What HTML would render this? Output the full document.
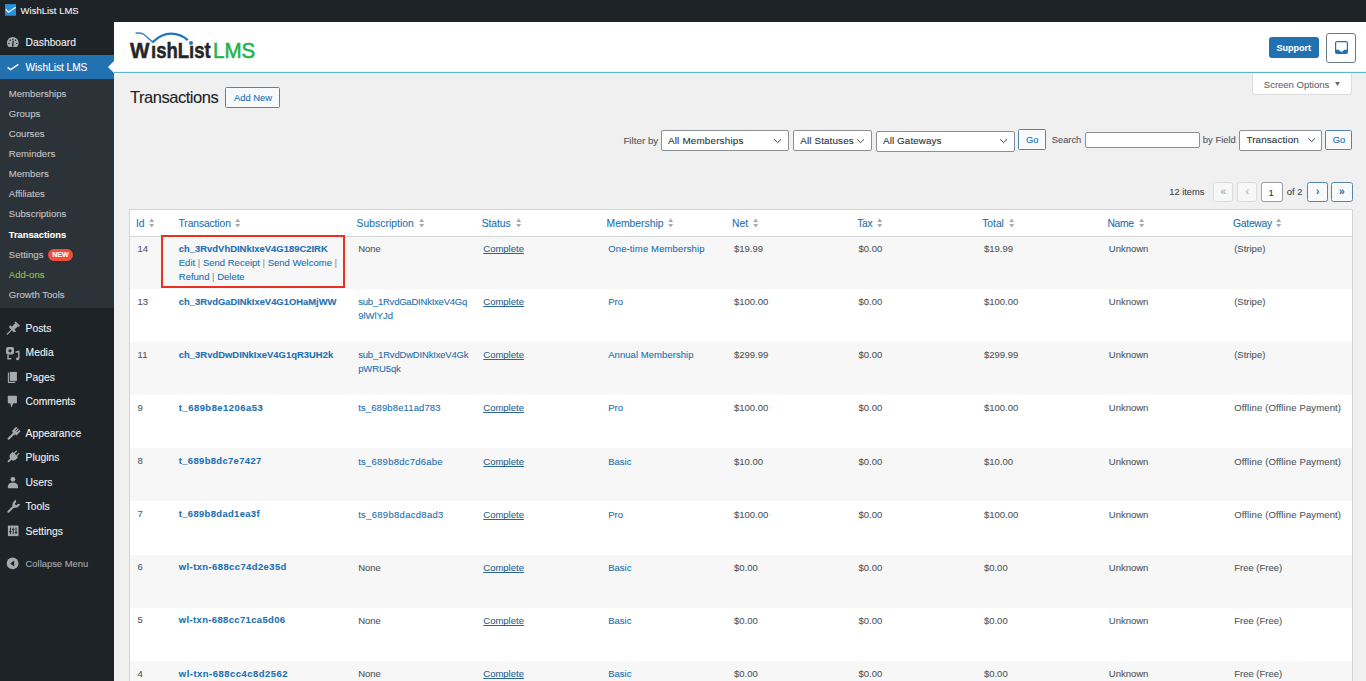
<!DOCTYPE html><html><head><meta charset="utf-8"><title>Transactions</title><style>
*{box-sizing:border-box;margin:0;padding:0}
html,body{width:1366px;height:681px;overflow:hidden;background:#f0f0f1;font-family:"Liberation Sans",sans-serif;color:#3c434a;-webkit-text-stroke-width:0.1px}
div,span,a{position:absolute;white-space:nowrap}
.t{line-height:1}
#adminbar{left:0;top:0;width:1366px;height:22px;background:#1d2327}
#side{left:0;top:22px;width:114px;height:659px;background:#1d2327}
#sub{left:0;top:79.2px;width:114px;height:228.6px;background:#2c3338}
#hl{left:0;top:54.6px;width:114px;height:24.6px;background:#2271b1}
.mi{left:25.6px;color:#f0f0f1;font-size:10.3px;line-height:12px}
.si{left:8.8px;color:#c3c4c7;font-size:9.6px;line-height:12px}
.ico{left:6px;width:14px;height:14px}
#header{left:114px;top:22px;width:1252px;height:50px;background:#fff}
#hline{left:114px;top:72px;width:1252px;height:1.2px;background:#5bb7c9}
#hhalo{left:114px;top:71px;width:1252px;height:1px;background:#e4f9fc}
.btn{border:1px solid #5486a8;border-radius:1.5px;color:#2271b1;background:#f8f9fa;font-size:9.4px;text-align:center}
.sel{border:1px solid #8c8f94;border-radius:2px;background:#fff;color:#2c3338;font-size:10.25px}
.sel span{left:6px}
.sel svg{position:absolute;top:50%;margin-top:-4px}
.lbl{font-size:9.8px;color:#50575e}
.pbtn{border:1px solid #dcdcde;border-radius:2.5px;background:#f6f7f7;color:#a7aaad;font-size:10px;text-align:center}
.pbtn.on{border-color:#5486a8;color:#2271b1;background:#f8f9fa;font-weight:bold}
#table{left:129.4px;top:209.3px;width:1223.8px;height:480px;border:1px solid #d4d5d7;background:#fff;overflow:hidden}
.th{color:#2271b1;font-size:10.3px;line-height:12px}
.th svg{position:absolute;top:1px}
.row{left:0;width:1222px;height:53.15px}
.row.alt{background:#f7f7f7}
.c{font-size:9.5px;line-height:13.9px;color:#50575e}
.lnk{color:#2271b1}
.b{font-weight:bold}
.u{text-decoration:underline;text-decoration-skip-ink:none;color:#2b6590}
</style></head><body>
<div id="adminbar">
<svg style="position:absolute;left:4.7px;top:4.1px" width="11.7" height="11.8" viewBox="0 0 12 12"><rect width="12" height="12" fill="#2a8fd8"/><path d="M0.8 5.3 L3.5 8.4 L11 3.2" stroke="#f4f6f8" stroke-width="1.3" fill="none" stroke-linejoin="round"/></svg>
<span class="t" style="left:20.6px;top:6.4px;font-size:9.5px;color:#f0f0f1">WishList LMS</span>
</div>
<div id="side"></div><div id="sub"></div><div id="hl"></div>
<svg style="position:absolute;left:108px;top:61px" width="6" height="12" viewBox="0 0 6 12"><path d="M6 0 L0 6 L6 12Z" fill="#fff"/></svg>
<span class="mi t" style="top:36.55px;font-size:10.3px;color:#f0f0f1;left:25.6px">Dashboard</span>
<span class="mi t" style="top:61.95px;font-size:10.1px;color:#fff;left:25.6px">WishList LMS</span>
<span class="si t" style="top:87.70px;color:#c3c4c7;">Memberships</span>
<span class="si t" style="top:108.10px;color:#c3c4c7;">Groups</span>
<span class="si t" style="top:128.10px;color:#c3c4c7;">Courses</span>
<span class="si t" style="top:148.10px;color:#c3c4c7;">Reminders</span>
<span class="si t" style="top:168.10px;color:#c3c4c7;">Members</span>
<span class="si t" style="top:188.10px;color:#c3c4c7;">Affiliates</span>
<span class="si t" style="top:208.30px;color:#c3c4c7;">Subscriptions</span>
<span class="si t" style="top:228.50px;color:#fff;font-weight:bold;font-size:9.3px;">Transactions</span>
<span class="si t" style="top:248.90px;color:#c3c4c7;">Settings</span>
<span class="si t" style="top:269.00px;color:#8bc34a;">Add-ons</span>
<span class="si t" style="top:288.70px;color:#c3c4c7;">Growth Tools</span>
<span style="left:47.9px;top:248.8px;width:25.2px;height:12px;border-radius:6.5px;background:#ee4e3a;color:#fff;font-size:7px;font-weight:bold;text-align:center;line-height:12px">NEW</span>
<svg style="position:absolute;left:0;top:0" width="114" height="681" viewBox="0 0 114 681">
<g fill="#a7aaad">
<path d="M8.6 47.1 A5.9 5.9 0 1 1 17 47.1 Z"/>
<path d="M12.8 46.2 L13.1 41.2" stroke="#1d2327" stroke-width="1.3" stroke-linecap="round"/>
<circle cx="10.2" cy="40.3" r="0.75" fill="#1d2327"/><circle cx="15.5" cy="40.3" r="0.75" fill="#1d2327"/><circle cx="8.9" cy="43.4" r="0.7" fill="#1d2327"/><circle cx="16.8" cy="43.4" r="0.7" fill="#1d2327"/><circle cx="12.9" cy="39.4" r="0.7" fill="#1d2327"/>
</g>
<path d="M7.6 67.3 L10.6 69.6 L18.4 64.4" stroke="#f0f0f1" stroke-width="1.7" fill="none" stroke-linejoin="round"/>
<g fill="#a7aaad" transform="translate(12.2 329.2) rotate(45) scale(1.05)">
<rect x="-2.9" y="-7.6" width="5.8" height="1.8" rx="0.4"/><rect x="-1.9" y="-6" width="3.8" height="5" /><path d="M-4.3 -1.2 H4.3 L3.2 1 H-3.2 Z"/><rect x="-0.55" y="0.8" width="1.1" height="6.3"/>
</g>
<g fill="#a7aaad">
<path d="M6 349 Q6 347 8 347 H12.2 Q14 347 14 349 V352.5 Q14 354.5 12 354.5 H8 Q6 354.5 6 352.5 Z"/>
<circle cx="10" cy="350.8" r="1.6" fill="#1d2327"/>
<path d="M8 354.5 V358.8 H11.2" stroke="#a7aaad" stroke-width="1.4" fill="none"/>
<path d="M15.6 352.2 L18.8 351.4 V358.6" stroke="#a7aaad" stroke-width="1.4" fill="none"/>
<ellipse cx="17.6" cy="358.8" rx="1.7" ry="1.4"/>
</g>
<g fill="#a7aaad">
<path d="M8.4 372.6 V382.4 H15.3" stroke="#a7aaad" stroke-width="1.1" fill="none"/>
<rect x="9.8" y="371.9" width="7.1" height="9"/>
</g>
<g fill="#a7aaad">
<rect x="7.8" y="395.7" width="9.1" height="7.6" rx="0.5"/>
<path d="M10.2 403 L11.3 407.4 L13.6 403 Z"/>
</g>
<g fill="#a7aaad" transform="translate(13.2 434.2) rotate(45)">
<path d="M-3.2 -7.2 H3.2 V-1.4 H-3.2 Z"/><rect x="-1.6" y="-1.6" width="3.2" height="1.8"/><rect x="-1.05" y="0" width="2.1" height="7.4" rx="0.8"/>
<rect x="-1.4" y="-7.2" width="0.7" height="3.2" fill="#1d2327"/><rect x="0.7" y="-7.2" width="0.7" height="3.2" fill="#1d2327"/>
</g>
<g fill="#a7aaad" transform="translate(13.3 456.6) rotate(45)">
<rect x="-2.3" y="-6.6" width="1.2" height="4"/><rect x="1.1" y="-6.6" width="1.2" height="4"/>
<path d="M-3.8 -3 H3.8 V0.2 Q3.8 3 0.9 3.4 V7.5 H-0.9 V3.4 Q-3.8 3 -3.8 0.2 Z"/>
</g>
<g fill="#a7aaad">
<circle cx="12.9" cy="479.3" r="2.4"/>
<path d="M7.9 488.2 V486.2 Q8.4 482.6 12.9 482.6 Q17.4 482.6 18 486.2 V488.2 Z"/>
</g>
<g fill="#a7aaad" transform="translate(12.7 507.4) rotate(45)">
<rect x="-1" y="-1.5" width="2" height="8.6" rx="1"/>
<path d="M-3.4 -4.6 A3.4 3.4 0 0 0 3.4 -4.6 V-7.6 L1.2 -6.2 V-3.8 H-1.2 V-6.2 L-3.4 -7.6 Z"/>
<rect x="-1.5" y="-2.8" width="3" height="2"/>
</g>
<g>
<rect x="7.9" y="525.6" width="10.6" height="10.5" fill="#a7aaad"/>
<path d="M10.4 527.6 V534.2 M9.3 531.6 H11.5 M13.2 527.6 V534.2 M12.1 529.4 H14.3 M16 527.6 V534.2 M14.9 532.4 H17.1" stroke="#1d2327" stroke-width="1"/>
</g>
<circle cx="12.6" cy="563.4" r="5.9" fill="#a7aaad"/>
<path d="M14.2 560.4 L10.2 563.4 L14.2 566.4 Z" fill="#1d2327"/>
</svg>
<span class="mi t" style="top:322.55px;font-size:10.3px;color:#f0f0f1;left:25.6px">Posts</span>
<span class="mi t" style="top:346.85px;font-size:10.3px;color:#f0f0f1;left:25.6px">Media</span>
<span class="mi t" style="top:371.65px;font-size:10.3px;color:#f0f0f1;left:25.6px">Pages</span>
<span class="mi t" style="top:395.95px;font-size:10.3px;color:#f0f0f1;left:25.6px">Comments</span>
<span class="mi t" style="top:428.05px;font-size:10.3px;color:#f0f0f1;left:25.6px">Appearance</span>
<span class="mi t" style="top:451.85px;font-size:10.3px;color:#f0f0f1;left:25.6px">Plugins</span>
<span class="mi t" style="top:477.25px;font-size:10.3px;color:#f0f0f1;left:25.6px">Users</span>
<span class="mi t" style="top:501.45px;font-size:10.3px;color:#f0f0f1;left:25.6px">Tools</span>
<span class="mi t" style="top:525.75px;font-size:10.3px;color:#f0f0f1;left:25.6px">Settings</span>
<span class="mi t" style="top:557.90px;font-size:9.4px;color:#a7aaad;left:25.6px">Collapse Menu</span>
<div id="header"></div><div id="hhalo"></div><div id="hline"></div>
<span class="t" style="left:129.8px;top:40.2px;font-size:21.7px;font-weight:bold;color:#262626;transform:scaleX(0.95);transform-origin:0 0;-webkit-text-stroke:0.5px #262626">W</span>
<span class="t" style="left:150.6px;top:40.2px;font-size:21.7px;font-weight:bold;color:#262626;transform:scaleX(0.853);transform-origin:0 0;-webkit-text-stroke:0.5px #262626">&#305;shL&#305;st</span>
<span class="t" style="left:212.9px;top:39.7px;font-size:22.3px;color:#27b24a;transform:scaleX(0.92);transform-origin:0 0;-webkit-text-stroke:0.6px #27b24a">LMS</span>
<svg style="position:absolute;left:130px;top:28px" width="70" height="20" viewBox="0 0 70 20"><path d="M6.2 5.1 Q10.5 4.6 13.8 6.3 L22.6 14.1" stroke="#3b82c4" stroke-width="1.5" fill="none" stroke-linecap="round"/><path d="M22.6 14.1 Q31.5 5.6 41 5.6 Q51 5.8 57.8 12.2" stroke="#2277c2" stroke-width="2.4" fill="none"/><circle cx="61" cy="15.1" r="2.0" fill="#1f78c8"/></svg>
<span style="left:1268.5px;top:37.1px;width:50.3px;height:20.9px;background:#2271b1;border-radius:3px"></span>
<span class="t" style="left:1276.4px;top:44.2px;font-size:9px;font-weight:bold;color:#fff">Support</span>
<span style="left:1326px;top:32.6px;width:30px;height:30px;border:1px solid #6b7a82;border-radius:3px;background:#fff"></span>
<svg style="position:absolute;left:1334.9px;top:40.8px" width="13" height="12.9" viewBox="0 0 13 12.9"><rect x="0" y="0" width="13" height="12.9" rx="1.9" fill="#2271b1"/><path d="M1.2 1.2 H11.8 V8.8 H8.9 Q8.4 10.8 6.5 10.8 Q4.6 10.8 4.1 8.8 H1.2 Z" fill="#fff"/></svg>
<span style="left:1252.2px;top:73px;width:100px;height:21.6px;background:#fff;border:1px solid #dcdcde;border-top:none;border-radius:0 0 3px 3px"></span>
<span class="t" style="left:1263.8px;top:79.55px;font-size:9.5px;color:#646970">Screen Options</span>
<svg style="position:absolute;left:1335.4px;top:82px" width="5" height="4" viewBox="0 0 5 4"><path d="M0 0 L5 0 L2.5 4Z" fill="#646970"/></svg>
<span class="t" style="left:130px;top:89.3px;font-size:16.5px;letter-spacing:-0.47px;color:#1d2327">Transactions</span>
<span class="btn" style="left:225.3px;top:87.3px;width:55px;height:20.4px"></span>
<span class="t" style="left:234px;top:93.2px;font-size:9.4px;color:#2271b1">Add New</span>
<span class="lbl t" style="left:623.4px;top:135.9px">Filter by</span>
<span class="sel" style="left:661px;top:130.3px;width:127.9px;height:20.9px"><span class="t" style="left:6px;top:4.60px;font-size:9.9px;letter-spacing:0.169px">All Memberships</span><svg style="right:6.4px" width="9" height="8" viewBox="0 0 9 8"><path d="M1.2 2.3 L4.6 5.7 L8 2.3" stroke="#3c434a" stroke-width="1" fill="none"/></svg></span>
<span class="sel" style="left:793.2px;top:130.3px;width:78.7px;height:20.9px"><span class="t" style="left:6px;top:4.60px;font-size:9.9px;letter-spacing:0.127px">All Statuses</span><svg style="right:5.4px" width="9" height="8" viewBox="0 0 9 8"><path d="M1.2 2.3 L4.6 5.7 L8 2.3" stroke="#3c434a" stroke-width="1" fill="none"/></svg></span>
<span class="sel" style="left:876.1px;top:130.5px;width:138.5px;height:21.1px"><span class="t" style="left:6px;top:4.70px;font-size:9.9px;letter-spacing:0.069px">All Gateways</span><svg style="right:5.3px" width="9" height="8" viewBox="0 0 9 8"><path d="M1.2 2.3 L4.6 5.7 L8 2.3" stroke="#3c434a" stroke-width="1" fill="none"/></svg></span>
<span class="btn" style="left:1018.1px;top:129.3px;width:27.6px;height:21.0px"></span>
<span class="t" style="left:1025.9px;top:135.1px;font-size:9.4px;color:#2271b1">Go</span>
<span class="lbl t" style="left:1051.8px;top:135.8px;font-size:9.3px">Search</span>
<span style="left:1085.2px;top:132px;width:114.5px;height:15.6px;background:#fff;border:1px solid #8c8f94;border-radius:2px"></span>
<span class="lbl t" style="left:1202.8px;top:135.2px;font-size:9.45px">by Field</span>
<span class="sel" style="left:1239.4px;top:130px;width:82.2px;height:20.5px"><span class="t" style="left:6px;top:4.40px;font-size:9.9px;letter-spacing:0.113px">Transaction</span><svg style="right:4.2px" width="9" height="8" viewBox="0 0 9 8"><path d="M1.2 2.3 L4.6 5.7 L8 2.3" stroke="#3c434a" stroke-width="1" fill="none"/></svg></span>
<span class="btn" style="left:1325px;top:129.6px;width:27.4px;height:20.9px"></span>
<span class="t" style="left:1332.7px;top:135.4px;font-size:9.4px;color:#2271b1">Go</span>
<span class="lbl t" style="left:1169.3px;top:188.3px;color:#3c434a;font-size:9.3px">12 items</span>
<span class="pbtn" style="left:1213px;top:182px;width:20.4px;height:20.4px;line-height:18.5px">&laquo;</span>
<span class="pbtn" style="left:1236.9px;top:182px;width:20.5px;height:20.4px;line-height:18.5px">&lsaquo;</span>
<span style="left:1260.7px;top:182px;width:22px;height:20.4px;background:#fff;border:1px solid #9a9da1;border-radius:3px"></span>
<span class="t" style="left:1268.5px;top:188px;font-size:9.5px;color:#2c3338">1</span>
<span class="lbl t" style="left:1286.8px;top:188.3px;color:#3c434a;font-size:9.3px">of 2</span>
<span class="pbtn on" style="left:1307px;top:182px;width:21.2px;height:20.4px;line-height:18.5px">&rsaquo;</span>
<span class="pbtn on" style="left:1331.2px;top:182px;width:21.4px;height:20.4px;line-height:18.5px">&raquo;</span>
<div id="table">
<span class="th t" style="left:5.7px;top:8.1px;letter-spacing:-0.295px">Id</span>
<svg style="position:absolute;left:18.2px;top:7.7px" width="5.4" height="10" viewBox="0 0 5.4 10"><path d="M0.2 4.1 L2.7 0.4 L5.2 4.1Z M0.2 5.9 L2.7 9.6 L5.2 5.9Z" fill="#a7aaad"/></svg>
<span class="th t" style="left:48.2px;top:8.1px;letter-spacing:-0.112px">Transaction</span>
<svg style="position:absolute;left:105.0px;top:7.7px" width="5.4" height="10" viewBox="0 0 5.4 10"><path d="M0.2 4.1 L2.7 0.4 L5.2 4.1Z M0.2 5.9 L2.7 9.6 L5.2 5.9Z" fill="#a7aaad"/></svg>
<span class="th t" style="left:226.2px;top:8.1px;letter-spacing:0.052px">Subscription</span>
<svg style="position:absolute;left:288.5px;top:7.7px" width="5.4" height="10" viewBox="0 0 5.4 10"><path d="M0.2 4.1 L2.7 0.4 L5.2 4.1Z M0.2 5.9 L2.7 9.6 L5.2 5.9Z" fill="#a7aaad"/></svg>
<span class="th t" style="left:351.3px;top:8.1px;letter-spacing:-0.033px">Status</span>
<svg style="position:absolute;left:385.2px;top:7.7px" width="5.4" height="10" viewBox="0 0 5.4 10"><path d="M0.2 4.1 L2.7 0.4 L5.2 4.1Z M0.2 5.9 L2.7 9.6 L5.2 5.9Z" fill="#a7aaad"/></svg>
<span class="th t" style="left:476.2px;top:8.1px;letter-spacing:0.023px">Membership</span>
<svg style="position:absolute;left:537.2px;top:7.7px" width="5.4" height="10" viewBox="0 0 5.4 10"><path d="M0.2 4.1 L2.7 0.4 L5.2 4.1Z M0.2 5.9 L2.7 9.6 L5.2 5.9Z" fill="#a7aaad"/></svg>
<span class="th t" style="left:601.6px;top:8.1px;letter-spacing:0.057px">Net</span>
<svg style="position:absolute;left:622.2px;top:7.7px" width="5.4" height="10" viewBox="0 0 5.4 10"><path d="M0.2 4.1 L2.7 0.4 L5.2 4.1Z M0.2 5.9 L2.7 9.6 L5.2 5.9Z" fill="#a7aaad"/></svg>
<span class="th t" style="left:726.9px;top:8.1px;letter-spacing:-0.343px">Tax</span>
<svg style="position:absolute;left:746.8px;top:7.7px" width="5.4" height="10" viewBox="0 0 5.4 10"><path d="M0.2 4.1 L2.7 0.4 L5.2 4.1Z M0.2 5.9 L2.7 9.6 L5.2 5.9Z" fill="#a7aaad"/></svg>
<span class="th t" style="left:851.8px;top:8.1px;letter-spacing:-0.011px">Total</span>
<svg style="position:absolute;left:878.4px;top:7.7px" width="5.4" height="10" viewBox="0 0 5.4 10"><path d="M0.2 4.1 L2.7 0.4 L5.2 4.1Z M0.2 5.9 L2.7 9.6 L5.2 5.9Z" fill="#a7aaad"/></svg>
<span class="th t" style="left:977.0px;top:8.1px;letter-spacing:-0.268px">Name</span>
<svg style="position:absolute;left:1008.2px;top:7.7px" width="5.4" height="10" viewBox="0 0 5.4 10"><path d="M0.2 4.1 L2.7 0.4 L5.2 4.1Z M0.2 5.9 L2.7 9.6 L5.2 5.9Z" fill="#a7aaad"/></svg>
<span class="th t" style="left:1102.6px;top:8.1px;letter-spacing:-0.235px">Gateway</span>
<svg style="position:absolute;left:1145.8px;top:7.7px" width="5.4" height="10" viewBox="0 0 5.4 10"><path d="M0.2 4.1 L2.7 0.4 L5.2 4.1Z M0.2 5.9 L2.7 9.6 L5.2 5.9Z" fill="#a7aaad"/></svg>
<span style="left:0;top:25.3px;width:1222px;height:1px;background:#d4d5d7"></span>
<div class="row alt" style="top:26.30px;height:52.00px"></div>
<span class="c t" style="left:7.2px;top:31.4px">14</span>
<span class="c lnk b t" style="left:48.4px;top:31.4px;font-size:9.45px;letter-spacing:-0.002px">ch_3RvdVhDINkIxeV4G189C2IRK</span>
<span class="c lnk" style="left:48.4px;top:45.7px">Edit <span style="position:static;color:#8c8f94">|</span> Send Receipt <span style="position:static;color:#8c8f94">|</span> Send Welcome <span style="position:static;color:#8c8f94">|</span></span>
<span class="c lnk" style="left:48.4px;top:59.6px">Refund <span style="position:static;color:#8c8f94">|</span> Delete</span>
<span class="c" style="left:227.8px;top:31.8px">None</span>
<span class="c lnk u" style="left:352.9px;top:31.8px">Complete</span>
<span class="c lnk" style="left:477.8px;top:31.8px;letter-spacing:0.133px">One-time Membership</span>
<span class="c" style="left:603.6px;top:31.8px">$19.99</span>
<span class="c" style="left:728.1px;top:31.8px">$0.00</span>
<span class="c" style="left:853.5px;top:31.8px">$19.99</span>
<span class="c" style="left:978.4px;top:31.8px">Unknown</span>
<span class="c" style="left:1103.8px;top:31.8px;letter-spacing:0.000px">(Stripe)</span>
<div class="row" style="top:78.30px;height:53.20px"></div>
<span class="c t" style="left:7.2px;top:84.6px">13</span>
<span class="c lnk b t" style="left:48.4px;top:84.6px;font-size:9.45px;letter-spacing:-0.029px">ch_3RvdGaDINkIxeV4G1OHaMjWW</span>
<span class="c lnk" style="left:227.8px;top:85.0px;letter-spacing:-0.220px">sub_1RvdGaDINkIxeV4Gq</span>
<span class="c lnk" style="left:227.8px;top:98.5px;letter-spacing:-0.006px">9lWlYJd</span>
<span class="c lnk u" style="left:352.9px;top:85.0px">Complete</span>
<span class="c lnk" style="left:477.8px;top:85.0px;letter-spacing:0.000px">Pro</span>
<span class="c" style="left:603.6px;top:85.0px">$100.00</span>
<span class="c" style="left:728.1px;top:85.0px">$0.00</span>
<span class="c" style="left:853.5px;top:85.0px">$100.00</span>
<span class="c" style="left:978.4px;top:85.0px">Unknown</span>
<span class="c" style="left:1103.8px;top:85.0px;letter-spacing:0.000px">(Stripe)</span>
<div class="row alt" style="top:131.50px;height:53.20px"></div>
<span class="c t" style="left:7.2px;top:137.7px">11</span>
<span class="c lnk b t" style="left:48.4px;top:137.7px;font-size:9.45px;letter-spacing:0.007px">ch_3RvdDwDINkIxeV4G1qR3UH2k</span>
<span class="c lnk" style="left:227.8px;top:138.1px;letter-spacing:-0.183px">sub_1RvdDwDINkIxeV4Gk</span>
<span class="c lnk" style="left:227.8px;top:151.6px;letter-spacing:-0.112px">pWRU5qk</span>
<span class="c lnk u" style="left:352.9px;top:138.1px">Complete</span>
<span class="c lnk" style="left:477.8px;top:138.1px;letter-spacing:0.054px">Annual Membership</span>
<span class="c" style="left:603.6px;top:138.1px">$299.99</span>
<span class="c" style="left:728.1px;top:138.1px">$0.00</span>
<span class="c" style="left:853.5px;top:138.1px">$299.99</span>
<span class="c" style="left:978.4px;top:138.1px">Unknown</span>
<span class="c" style="left:1103.8px;top:138.1px;letter-spacing:0.000px">(Stripe)</span>
<div class="row" style="top:184.70px;height:53.20px"></div>
<span class="c t" style="left:7.2px;top:190.8px">9</span>
<span class="c lnk b t" style="left:48.4px;top:190.8px;font-size:9.45px;letter-spacing:0.491px">t_689b8e1206a53</span>
<span class="c lnk" style="left:227.8px;top:191.2px;letter-spacing:0.110px">ts_689b8e11ad783</span>
<span class="c lnk u" style="left:352.9px;top:191.2px">Complete</span>
<span class="c lnk" style="left:477.8px;top:191.2px;letter-spacing:0.000px">Pro</span>
<span class="c" style="left:603.6px;top:191.2px">$100.00</span>
<span class="c" style="left:728.1px;top:191.2px">$0.00</span>
<span class="c" style="left:853.5px;top:191.2px">$100.00</span>
<span class="c" style="left:978.4px;top:191.2px">Unknown</span>
<span class="c" style="left:1103.8px;top:191.2px;letter-spacing:0.130px">Offline (Offline Payment)</span>
<div class="row alt" style="top:237.90px;height:53.20px"></div>
<span class="c t" style="left:7.2px;top:243.9px">8</span>
<span class="c lnk b t" style="left:48.4px;top:243.9px;font-size:9.45px;letter-spacing:0.343px">t_689b8dc7e7427</span>
<span class="c lnk" style="left:227.8px;top:244.3px;letter-spacing:0.236px">ts_689b8dc7d6abe</span>
<span class="c lnk u" style="left:352.9px;top:244.3px">Complete</span>
<span class="c lnk" style="left:477.8px;top:244.3px;letter-spacing:0.000px">Basic</span>
<span class="c" style="left:603.6px;top:244.3px">$10.00</span>
<span class="c" style="left:728.1px;top:244.3px">$0.00</span>
<span class="c" style="left:853.5px;top:244.3px">$10.00</span>
<span class="c" style="left:978.4px;top:244.3px">Unknown</span>
<span class="c" style="left:1103.8px;top:244.3px;letter-spacing:0.130px">Offline (Offline Payment)</span>
<div class="row" style="top:291.10px;height:53.20px"></div>
<span class="c t" style="left:7.2px;top:297.0px">7</span>
<span class="c lnk b t" style="left:48.4px;top:297.0px;font-size:9.45px;letter-spacing:0.336px">t_689b8dad1ea3f</span>
<span class="c lnk" style="left:227.8px;top:297.4px;letter-spacing:0.286px">ts_689b8dacd8ad3</span>
<span class="c lnk u" style="left:352.9px;top:297.4px">Complete</span>
<span class="c lnk" style="left:477.8px;top:297.4px;letter-spacing:0.000px">Pro</span>
<span class="c" style="left:603.6px;top:297.4px">$100.00</span>
<span class="c" style="left:728.1px;top:297.4px">$0.00</span>
<span class="c" style="left:853.5px;top:297.4px">$100.00</span>
<span class="c" style="left:978.4px;top:297.4px">Unknown</span>
<span class="c" style="left:1103.8px;top:297.4px;letter-spacing:0.130px">Offline (Offline Payment)</span>
<div class="row alt" style="top:344.30px;height:53.20px"></div>
<span class="c t" style="left:7.2px;top:350.1px">6</span>
<span class="c lnk b t" style="left:48.4px;top:350.1px;font-size:9.45px;letter-spacing:0.415px">wl-txn-688cc74d2e35d</span>
<span class="c" style="left:227.8px;top:350.5px">None</span>
<span class="c lnk u" style="left:352.9px;top:350.5px">Complete</span>
<span class="c lnk" style="left:477.8px;top:350.5px;letter-spacing:0.000px">Basic</span>
<span class="c" style="left:603.6px;top:350.5px">$0.00</span>
<span class="c" style="left:728.1px;top:350.5px">$0.00</span>
<span class="c" style="left:853.5px;top:350.5px">$0.00</span>
<span class="c" style="left:978.4px;top:350.5px">Unknown</span>
<span class="c" style="left:1103.8px;top:350.5px;letter-spacing:0.000px">Free (Free)</span>
<div class="row" style="top:397.50px;height:53.20px"></div>
<span class="c t" style="left:7.2px;top:403.2px">5</span>
<span class="c lnk b t" style="left:48.4px;top:403.2px;font-size:9.45px;letter-spacing:0.376px">wl-txn-688cc71ca5d06</span>
<span class="c" style="left:227.8px;top:403.6px">None</span>
<span class="c lnk u" style="left:352.9px;top:403.6px">Complete</span>
<span class="c lnk" style="left:477.8px;top:403.6px;letter-spacing:0.000px">Basic</span>
<span class="c" style="left:603.6px;top:403.6px">$0.00</span>
<span class="c" style="left:728.1px;top:403.6px">$0.00</span>
<span class="c" style="left:853.5px;top:403.6px">$0.00</span>
<span class="c" style="left:978.4px;top:403.6px">Unknown</span>
<span class="c" style="left:1103.8px;top:403.6px;letter-spacing:0.000px">Free (Free)</span>
<div class="row alt" style="top:450.70px;height:53.20px"></div>
<span class="c t" style="left:7.2px;top:456.3px">4</span>
<span class="c lnk b t" style="left:48.4px;top:456.3px;font-size:9.45px;letter-spacing:0.506px">wl-txn-688cc4c8d2562</span>
<span class="c" style="left:227.8px;top:456.7px">None</span>
<span class="c lnk u" style="left:352.9px;top:456.7px">Complete</span>
<span class="c lnk" style="left:477.8px;top:456.7px;letter-spacing:0.000px">Basic</span>
<span class="c" style="left:603.6px;top:456.7px">$0.00</span>
<span class="c" style="left:728.1px;top:456.7px">$0.00</span>
<span class="c" style="left:853.5px;top:456.7px">$0.00</span>
<span class="c" style="left:978.4px;top:456.7px">Unknown</span>
<span class="c" style="left:1103.8px;top:456.7px;letter-spacing:0.000px">Free (Free)</span>
</div>
<span style="left:161.1px;top:235px;width:184.4px;height:52.8px;border:2.3px solid #e8321f"></span>
</body></html>
